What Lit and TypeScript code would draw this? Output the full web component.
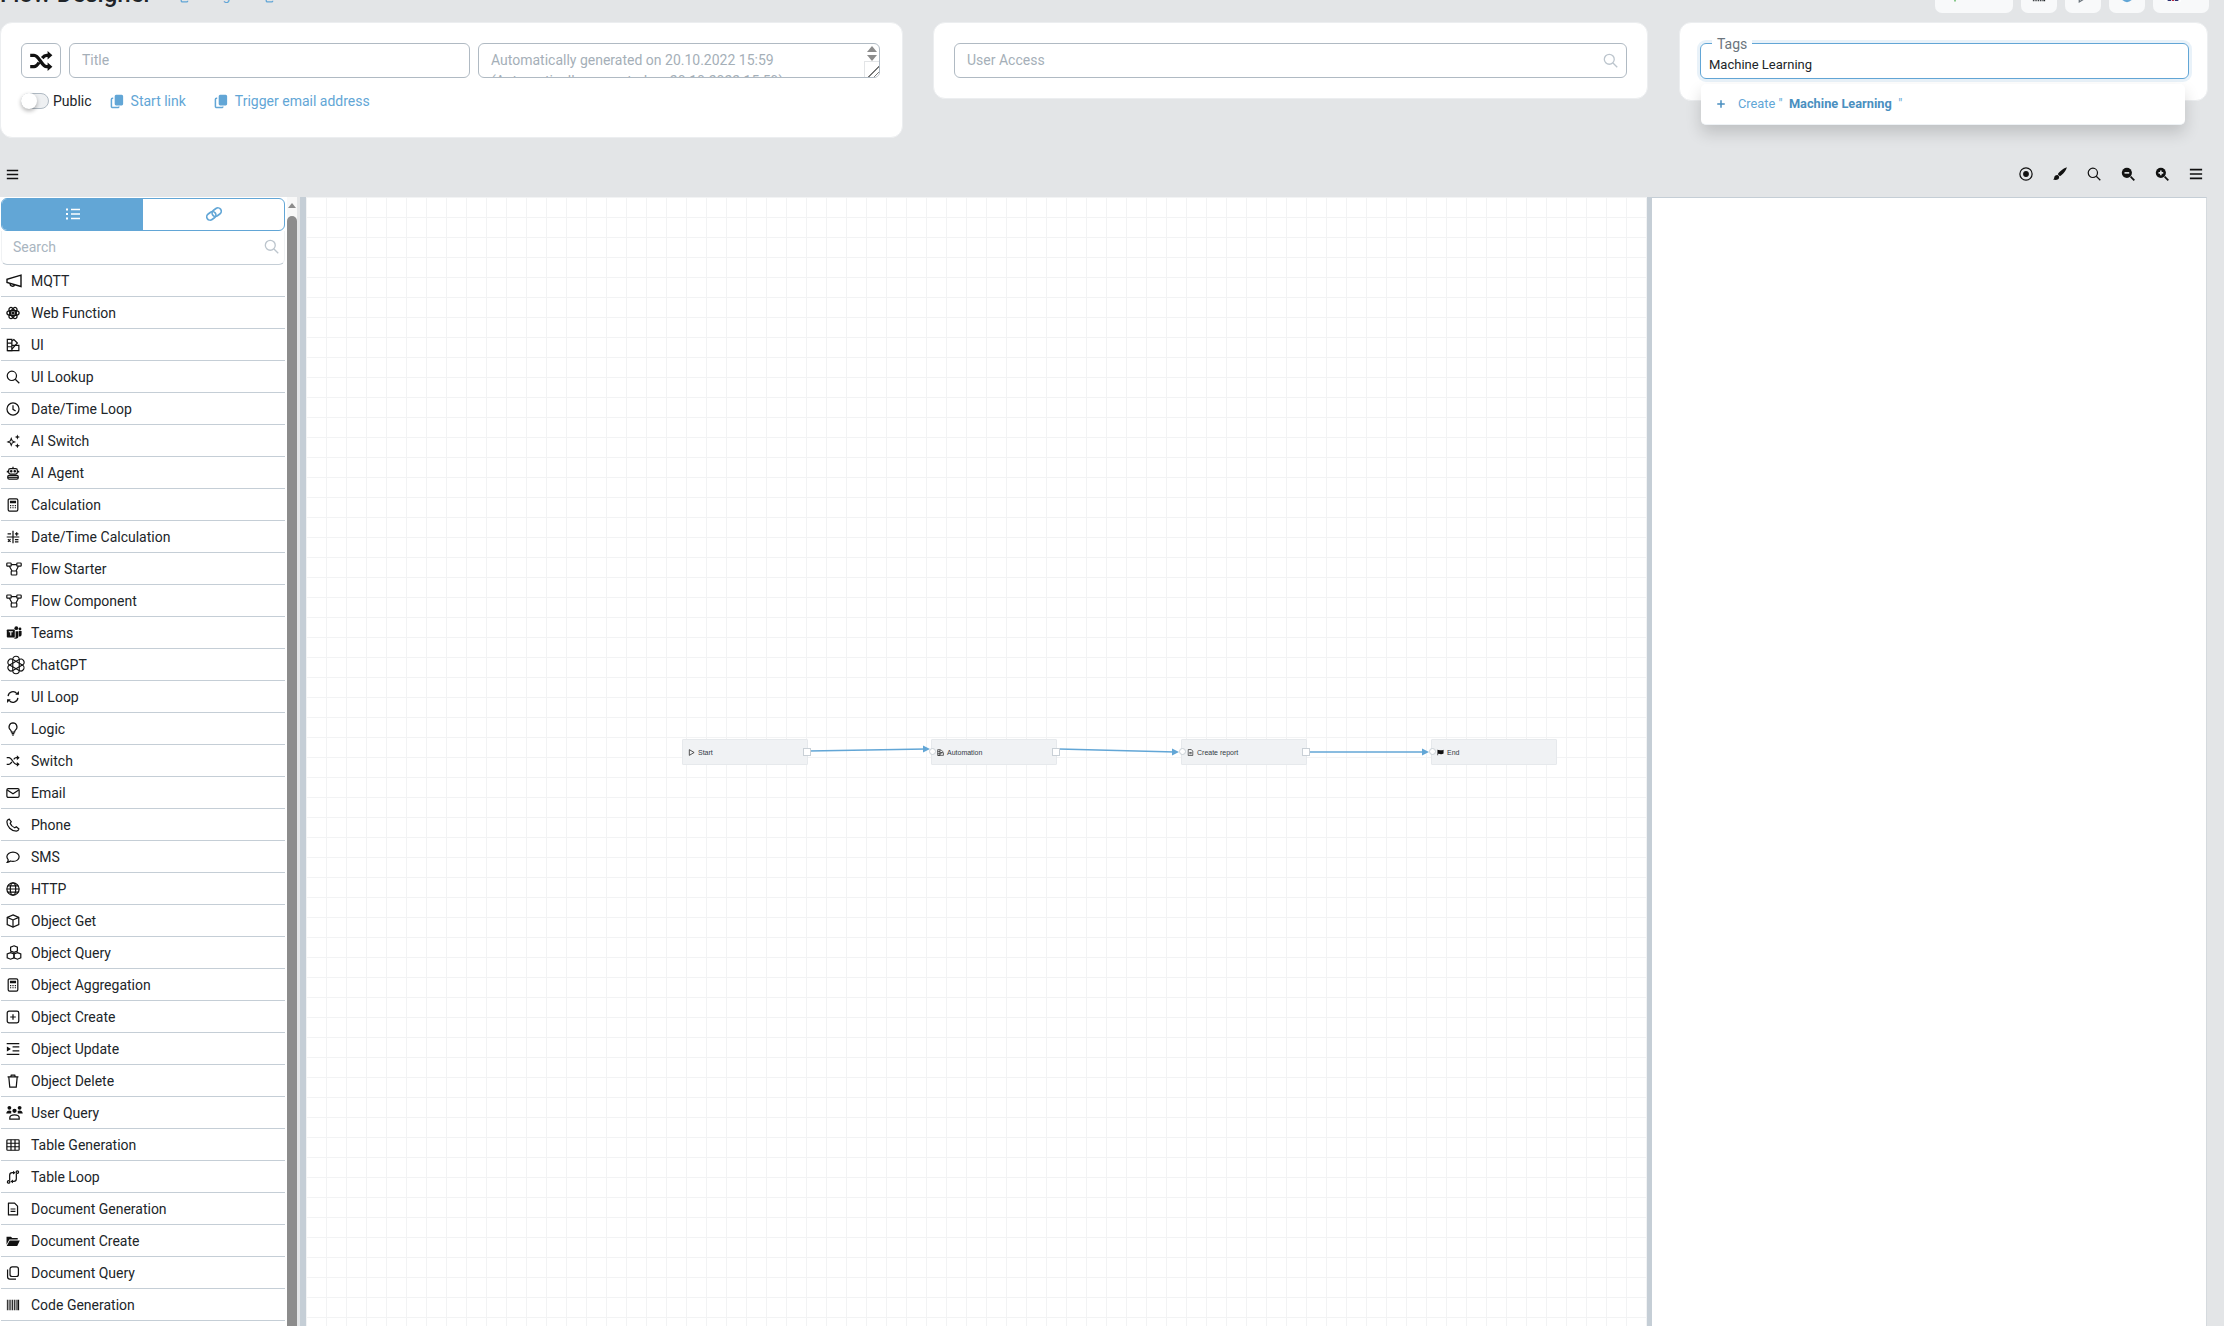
import { LitElement, css, html, svg } from "lit";
import { customElement } from "lit/decorators.js";

const ICONS: Record<string, unknown> = {
  megaphone: svg`<path d="M1 6.300v3.200l14 4V2.200z"/><path d="M4.300 10.500a2.200 2.200 0 0 0 4.300 1"/>`,
  atom: svg`<g stroke-width="1.500"><ellipse cx="8" cy="8" rx="7" ry="3"/><ellipse cx="8" cy="8" rx="7" ry="3" transform="rotate(60 8 8)"/><ellipse cx="8" cy="8" rx="7" ry="3" transform="rotate(120 8 8)"/></g><circle cx="8" cy="8" r="1.200" fill="currentColor"/>`,
  swatch: svg`<path d="M1.500 1.500h5.200v13H1.500z"/><path d="M1.500 5.800h5.200M1.500 10h5.200"/><path d="M6.700 3.600 9 1.700l4 4-6.300 7"/><path d="M6.700 8.400h8v6.100h-13"/>`,
  search: svg`<circle cx="6.700" cy="6.700" r="5.300"/><path d="m10.600 10.600 4.600 4.600"/>`,
  clock: svg`<circle cx="8" cy="8" r="6.900"/><path d="M8 3.800v4.600l3 1.900"/>`,
  spark: svg`<path fill="currentColor" stroke="none" d="M6 3.500 7.600 7.400 11.500 9 7.600 10.600 6 14.500 4.400 10.600.5 9l3.900-1.600zm0 3L5.400 8.400 3.400 9l2 .6.6 1.900.6-1.900 2-.6-2-.6zM13 .5l.8 2.200 2.200.8-2.200.8-.8 2.200-.8-2.200-2.200-.8 2.200-.8zM13 10.500l.8 2.200 2.200.8-2.200.8-.8 2.200-.8-2.200-2.200-.8 2.200-.8z"/>`,
  robot: svg`<rect x="3" y="3" width="10" height="6.200" rx="2"/><path d="M8 .8V3M1.600 5.500v2M14.400 5.500v2"/><circle cx="6" cy="6" r=".8" fill="currentColor"/><circle cx="10" cy="6" r=".8" fill="currentColor"/><rect x="2" y="10.800" width="12" height="4.200" rx="1.600"/><path d="M2 12.900h12"/>`,
  calc: svg`<rect x="2.500" y="1" width="11" height="14" rx="1.600"/><path fill="currentColor" stroke="none" d="M4.500 3h7v3h-7zM4.600 8h1.400v1.300H4.600zM7.300 8h1.400v1.300H7.300zM10 8h1.400v1.300H10zM4.600 10.500h1.400v1.300H4.600zM7.300 10.500h1.400v1.300H7.300zM10 10.500h1.400v1.300H10z"/>`,
  ops: svg`<path d="M.8 8h14.400M8 .8v14.400M1.800 4.500h4M10.200 4.500h4M12.200 2.500v4M2.200 10.600l3 3M5.200 10.600l-3 3M10.200 11h4M10.200 13.500h4"/>`,
  flow: svg`<g stroke-width="1.200"><rect x=".8" y="2" width="4.400" height="3.200" rx=".8"/><rect x="10.800" y="2" width="4.400" height="3.200" rx=".8"/><rect x="5.200" y="10" width="5.600" height="4" rx=".8"/><path d="M5.200 3.600h5.600M3.400 5.200 6 10M12.400 5.200 10 10"/></g>`,
  teams: svg`<g fill="currentColor" stroke="none"><rect x=".8" y="4.500" width="8" height="8" rx=".8"/><circle cx="10.300" cy="3.200" r="1.900"/><circle cx="14" cy="4" r="1.400"/><path d="M9.600 6.200h2.900V11a2.800 2.800 0 0 1-2.900 2.700c-.9 0-1.600-.3-2.100-.9h1.600c.3 0 .5-.3.5-.6zM13 6h2.600v3.600a2 2 0 0 1-2.600 1.800z"/></g><path stroke="#fff" stroke-width="1.100" d="M2.800 6.800h4M4.800 6.800v3.800"/>`,
  gpt: svg`<g stroke-width=".9"><rect x="5.400" y="1" width="5.200" height="14" rx="2.600"/><rect x="5.400" y="1" width="5.200" height="14" rx="2.600" transform="rotate(60 8 8)"/><rect x="5.400" y="1" width="5.200" height="14" rx="2.600" transform="rotate(120 8 8)"/></g>`,
  loop: svg`<path d="M2.400 7a5.600 5.600 0 0 1 10-2.800M13.600 9a5.600 5.600 0 0 1-10 2.800"/><path fill="currentColor" stroke="none" d="M10.600 5.400h4.200V1.200zM5.400 10.600H1.200v4.200z"/>`,
  bulb: svg`<path d="M8 1a4.600 4.600 0 0 0-3 8c.7.7 1 1.400 1.200 2.500h3.600C10 10.400 10.300 9.700 11 9a4.600 4.600 0 0 0-3-8z"/><path d="M6.400 13.300h3.200M7.200 15h1.600"/>`,
  shuffle: svg`<path d="M.8 4.200h2.600c3.400 0 5 7.600 8.400 7.600h1.400M.8 11.800h2.600c1.400 0 2.400-1.300 3.300-2.800M8.800 6.100c.8-1 1.800-1.900 3-1.900h1.400"/><path fill="currentColor" stroke="none" d="M12.400 1.400 15.600 4.200 12.400 7zM12.400 9 15.600 11.800 12.400 14.600z"/>`,
  mail: svg`<rect x="1" y="3" width="14" height="10" rx="1.600"/><path d="M1.400 4.600 8 9l6.600-4.400"/>`,
  phone: svg`<path d="M3.600 1.200 6 4.200 4.800 6c.7 2.100 2.900 4.300 5.200 5.200l1.800-1.200 3 2.500c-.4 1.700-1.700 2.500-3 2.500C6 15 1 9.700 1 4.400 1 3 2.200 1.600 3.600 1.200z"/>`,
  chat: svg`<path d="M8 2.400c3.900 0 7 2.400 7 5.400s-3.100 5.300-7 5.300c-1 0-2-.1-2.900-.5-1 .7-2.200 1.300-3.700 1.500.7-.9 1-1.800 1.200-2.800C1.900 10.300 1 9.100 1 7.800c0-3 3.100-5.400 7-5.400z"/>`,
  globe: svg`<circle cx="8" cy="8" r="7"/><ellipse cx="8" cy="8" rx="3.100" ry="7"/><path d="M1 8h14M2 4.500h12M2 11.500h12"/>`,
  box: svg`<path d="M8 1 14.600 3.800v8.400L8 15l-6.600-2.800V3.800z"/><path d="M1.400 3.800 8 6.800l6.600-3M8 6.800V15"/>`,
  boxes: svg`<g stroke-width="1.200"><path d="M8 .8 11.400 2.200V6L8 7.400 4.600 6V2.200z"/><path d="M4.600 7.600 8 9v3.800l-3.400 1.400L1.200 12.800V9z"/><path d="M11.400 7.600 14.800 9v3.800l-3.400 1.400L8 12.800V9z"/></g>`,
  plusbox: svg`<rect x="1.400" y="1.400" width="13.200" height="13.200" rx="2"/><path d="M8 4.800v6.400M4.800 8h6.400"/>`,
  indent: svg`<path d="M.8 1.800h14.400M7.500 5.500h7.700M7.500 10.200h7.700M.8 14.200h14.400"/><path fill="currentColor" stroke="none" d="M1 5l4.600 2.900L1 10.800z"/>`,
  trash: svg`<path d="M1.800 3.300h12.400M3.200 3.300l1.100 11.700h7.400l1.100-11.700M5.400 3.300 6 1.300h4l.6 2"/>`,
  users: svg`<g fill="currentColor" stroke="none"><circle cx="3.200" cy="3.600" r="1.800"/><circle cx="12.800" cy="3.600" r="1.800"/><circle cx="8" cy="6.400" r="2"/><path d="M.2 9c.2-1.800 1.400-2.800 3-2.800.9 0 1.400.2 1.900.7-.3.8-.3 1.400-.1 2.100zM15.800 9c-.2-1.800-1.400-2.800-3-2.800-.9 0-1.400.2-1.900.7.3.8.3 1.400.1 2.100z"/></g><path d="M3.600 14.200v-1.200c0-1.600 2-2.800 4.400-2.800s4.400 1.200 4.400 2.800v1.200z" stroke-width="1.200"/>`,
  table: svg`<rect x="1" y="2" width="14" height="12" rx="1"/><path d="M1 6h14M1 10h14M5.700 2v12M10.300 2v12"/>`,
  tableloop: svg`<path d="M4.200 12V6a3 3 0 0 1 3-3h1M11.800 4v6a3 3 0 0 1-3 3H8"/><path fill="currentColor" stroke="none" d="M8 .8 11 3 8 5.200zM8 10.800 5 13l3 2.200z"/><circle cx="13" cy="2.400" r="1.400"/><circle cx="3" cy="13.600" r="1.400"/>`,
  file: svg`<path d="M2.800 1.200h7l3.400 3.600v10H2.800z" stroke-linejoin="round"/><path d="M5.200 8h5.600M5.200 10.800h5.600"/>`,
  folder: svg`<path fill="currentColor" stroke="none" d="M.6 3h5l1.500 1.600h6.300v1.800H3.800L.6 12.400zM4.200 7.400h11.600L12.800 13.800H.8z"/>`,
  copy: svg`<rect x="4.600" y="1" width="9.600" height="11" rx="2.400"/><path d="M1.800 4v8.400A2.600 2.600 0 0 0 4.400 15h7"/>`,
  barcode: svg`<path fill="currentColor" stroke="none" d="M1 2h1.100v12H1zM3 2h1.100v12H3zM5 2h1.100v12H5zM7 2h1.100v12H7zM9 2h1.100v12H9zM11 2h1.100v12H11zM13 2h2v12h-2z"/>`,
  list: svg`<path d="M6 3.500h9M6 8h9M6 12.500h9" stroke-width="1.600"/><path fill="currentColor" stroke="none" d="M1 2.500h2v2H1zM1 7h2v2H1zM1 11.500h2v2H1z"/>`,
  link: svg`<g stroke-width="1.500" transform="rotate(-35 8 8)"><rect x=".8" y="5" width="8.600" height="6" rx="3"/><rect x="6.600" y="5" width="8.600" height="6" rx="3"/></g>`,
  bars: svg`<path d="M1 3h14M1 8h14M1 13h14" stroke-width="1.900"/>`,
  docs: svg`<path fill="currentColor" stroke="none" d="M6.500.8h6A1.600 1.600 0 0 1 14 2.400v8.200a1.600 1.600 0 0 1-1.500 1.600h-6A1.600 1.600 0 0 1 5 10.600V2.400A1.600 1.600 0 0 1 6.500.8z"/><path stroke-width="1.600" d="M3.400 4.400h-.6A1.300 1.300 0 0 0 1.500 5.700v7.500A1.300 1.300 0 0 0 2.800 14.500h5.400a1.300 1.300 0 0 0 1.300-1.300"/>`,
  target: svg`<circle cx="8" cy="8" r="7"/><circle cx="8" cy="8" r="2.600" fill="currentColor"/>`,
  brush: svg`<path fill="currentColor" stroke="none" d="M15.800.2C12.500 1 7.500 4.800 5.500 8.200l2.400 2.300c3.400-2 7.300-6.800 7.900-10.300zM4.800 9C2.800 9 1.600 10.300 1.400 12c-.1 1.200-.5 1.800-1.400 2.400 2 .8 4.500.8 5.800-.3 1.200-1 1.600-2.800.8-3.900C6.300 9.500 5.500 9.100 4.800 9z"/>`,
  zoomout: svg`<circle cx="6.700" cy="6.700" r="5.800" fill="currentColor" stroke="none"/><path stroke-width="2" d="m11 11 4.200 4.200"/><path stroke="#e3e5e7" stroke-width="1.800" d="M4 6.700h5.400"/>`,
  zoomin: svg`<circle cx="6.700" cy="6.700" r="5.800" fill="currentColor" stroke="none"/><path stroke-width="2" d="m11 11 4.200 4.200"/><path stroke="#e3e5e7" stroke-width="1.800" d="M4 6.700h5.400M6.700 4v5.400"/>`,
  play: svg`<path d="M3 1.500 14 8 3 14.500z" stroke-width="1.600"/>`,
  flag: svg`<path fill="currentColor" stroke="none" d="M1 1.500h1.500v13H1zM2.500 2.500c3-1.400 4.500 1 7 .5 2-.4 3.500-.8 5.500-1.500v9c-2 .7-3.500 1.100-5.500 1.500-2.500.5-4-1.900-7-.5z"/>`,
  plus: svg`<path stroke-width="2.400" d="M8 2v12M2 8h12"/>`,
  dot: svg`<circle cx="8" cy="8" r="7" fill="currentColor" stroke="none"/>`,
  uk: svg`<rect y="2" width="16" height="12" fill="#2a2f6e" stroke="none"/><path stroke="#fff" stroke-width="2.400" d="M0 2l16 12M16 2 0 14"/><path stroke="#fff" stroke-width="3.600" d="M8 2v12M0 8h16"/><path stroke="#c0223a" stroke-width="2" d="M8 2v12M0 8h16"/>`,
};

// icons that are wider than the 14px default in the step list
const SIZES: Record<string, number> = { megaphone: 16, flow: 16, teams: 16, boxes: 16, users: 17, gpt: 20 };

const icon = (name: string, size = 14) => html`<svg
  class="icon"
  width=${size}
  height=${size}
  viewBox="0 0 16 16"
  fill="none"
  stroke="currentColor"
  stroke-width="1.400"
>
  ${ICONS[name]}
</svg>`;

const STEPS: [string, string][] = [
  ["megaphone", "MQTT"],
  ["atom", "Web Function"],
  ["swatch", "UI"],
  ["search", "UI Lookup"],
  ["clock", "Date/Time Loop"],
  ["spark", "AI Switch"],
  ["robot", "AI Agent"],
  ["calc", "Calculation"],
  ["ops", "Date/Time Calculation"],
  ["flow", "Flow Starter"],
  ["flow", "Flow Component"],
  ["teams", "Teams"],
  ["gpt", "ChatGPT"],
  ["loop", "UI Loop"],
  ["bulb", "Logic"],
  ["shuffle", "Switch"],
  ["mail", "Email"],
  ["phone", "Phone"],
  ["chat", "SMS"],
  ["globe", "HTTP"],
  ["box", "Object Get"],
  ["boxes", "Object Query"],
  ["calc", "Object Aggregation"],
  ["plusbox", "Object Create"],
  ["indent", "Object Update"],
  ["trash", "Object Delete"],
  ["users", "User Query"],
  ["table", "Table Generation"],
  ["tableloop", "Table Loop"],
  ["file", "Document Generation"],
  ["folder", "Document Create"],
  ["copy", "Document Query"],
  ["barcode", "Code Generation"],
];

const NODES = [
  { x: 376, label: "Start", ic: "play", input: false, output: true },
  { x: 625, label: "Automation", ic: "swatch", input: true, output: true },
  { x: 875, label: "Create report", ic: "file", input: true, output: true },
  { x: 1125, label: "End", ic: "flag", input: true, output: false },
];

const EDGES = [
  [503, 554, 624, 552],
  [753, 552, 873, 555],
  [1003, 555, 1123, 555],
];

@customElement("app-root")
export class AppRoot extends LitElement {
  static styles = css`
    :host {
      display: block;
      width: 2224px;
      height: 1326px;
      overflow: hidden;
      background: #e3e5e7;
      font-family: Roboto, "Liberation Sans", sans-serif;
      font-size: 14px;
      color: #212529;
    }
    .icon {
      flex: none;
      display: block;
    }
    .top {
      display: flex;
      height: 33px;
      margin-top: -20px;
      overflow: hidden;
    }
    .top h1 {
      margin: 0;
      font-size: 24px;
      font-weight: 500;
      line-height: 29px;
      white-space: nowrap;
    }
    .top-link {
      display: flex;
      gap: 14px;
      margin-left: 28px;
      padding-top: 10px;
      color: #62a6d6;
      line-height: 14px;
    }
    .top-link span {
      margin-top: -2px;
    }
    .top-link + .top-link {
      margin-left: 27px;
    }
    .top-btns {
      display: flex;
      gap: 8px;
      margin-left: auto;
      padding-right: 15px;
    }
    .top-btn {
      display: flex;
      align-items: flex-end;
      justify-content: center;
      width: 36px;
      height: 33px;
      padding-bottom: 10px;
      box-sizing: border-box;
      background: #f8f9fa;
      border-radius: 0 0 7px 7px;
    }
    .top-btn.wide {
      width: 78px;
      justify-content: flex-start;
      padding-left: 14px;
      color: #7cc47f;
    }
    .top-btn.flag {
      width: 56px;
      padding-right: 16px;
    }
    .cards {
      display: flex;
      align-items: flex-start;
      gap: 30px;
      height: 115px;
      margin-top: 9px;
    }
    .card {
      position: relative;
      box-sizing: border-box;
      background: #fff;
      border: 1px solid #eceef0;
      border-radius: 12px;
      padding: 20px;
    }
    .card.flow {
      width: 903px;
      height: 116px;
    }
    .card.access {
      width: 715px;
      height: 77px;
    }
    .card.tags {
      width: 529px;
      height: 79px;
      margin-left: 1px;
    }
    .fields {
      display: flex;
      gap: 8px;
    }
    .field {
      box-sizing: border-box;
      height: 35px;
      border: 1px solid #b0bac3;
      border-radius: 6px;
      background: #fff;
      color: #a5afb8;
      padding: 0 12px;
      line-height: 33px;
      white-space: nowrap;
      overflow: hidden;
    }
    .kind {
      display: flex;
      align-items: center;
      justify-content: center;
      box-sizing: border-box;
      width: 40px;
      height: 35px;
      border: 1px solid #b0bac3;
      border-radius: 6px;
      color: #111;
    }
    .kind .icon {
      stroke-width: 2.200;
    }
    .title-field {
      width: 401px;
    }
    .desc-field {
      position: relative;
      width: 402px;
      line-height: 21px;
      padding-top: 6px;
    }
    .spin {
      position: absolute;
      top: 2px;
      right: 2px;
      display: flex;
      flex-direction: column;
      gap: 3px;
      align-items: center;
    }
    .spin i {
      width: 0;
      height: 0;
      border-left: 5px solid transparent;
      border-right: 5px solid transparent;
    }
    .spin .up {
      border-bottom: 6px solid #8c8c8c;
    }
    .spin .down {
      border-top: 6px solid #8c8c8c;
    }
    .grip {
      position: absolute;
      right: 0;
      bottom: 0;
      width: 14px;
      height: 15px;
      background: linear-gradient(135deg, #fff 62%, #777 62%, #777 66%, #fff 66%, #fff 80%, #777 80%, #777 84%, #fff 84%);
      border-left: 1px solid #e3e5e7;
      border-top: 1px solid #e3e5e7;
    }
    .opts {
      display: flex;
      align-items: center;
      height: 16px;
      margin-top: 15px;
    }
    .toggle {
      position: relative;
      box-sizing: border-box;
      width: 28px;
      height: 16px;
      border: 1px solid #b0bac3;
      border-radius: 8px;
      background: #eef0f2;
      margin-right: 4px;
    }
    .toggle::after {
      content: "";
      position: absolute;
      left: -1px;
      top: -1px;
      width: 16px;
      height: 16px;
      border-radius: 50%;
      background: #fff;
      box-shadow: 0 2px 4px rgba(0, 0, 0, 0.3);
    }
    .opt-link {
      display: flex;
      align-items: center;
      gap: 6px;
      color: #62a6d6;
    }
    .opt-link.first {
      margin-left: 18px;
    }
    .opt-link.second {
      margin-left: 28px;
    }
    .access .field {
      position: relative;
      padding: 0 8px 0 12px;
      display: flex;
      align-items: center;
      justify-content: space-between;
    }
    .access .icon,
    .search .icon {
      color: #bcc5cd;
    }
    .tag-input {
      position: relative;
      width: 489px;
      height: 36px;
      box-sizing: border-box;
      border: 1px solid #62a6d6;
      border-radius: 6px;
      box-shadow: 0 0 0 3px rgba(98, 166, 214, 0.14);
      color: #212529;
      padding: 13px 8px 0;
      font-size: 13px;
      line-height: 15px;
    }
    .legend {
      position: absolute;
      left: 11px;
      top: -8px;
      padding: 0 5px;
      background: #fff;
      color: #6c757d;
      font-size: 14px;
      line-height: 16px;
    }
    .menu {
      position: absolute;
      left: 21px;
      top: 61px;
      box-sizing: border-box;
      width: 484px;
      height: 41px;
      padding: 0 0 1px 15px;
      background: #fff;
      border-radius: 5px;
      border-bottom: 1px solid #eef2f5;
      box-shadow: 0 8px 16px rgba(0, 0, 0, 0.16);
      display: flex;
      align-items: center;
      color: #62a6d6;
      font-size: 12.800px;
      white-space: pre;
      z-index: 2;
    }
    .menu .icon {
      margin-right: 12px;
      color: #4a8fc0;
    }
    .menu b {
      color: #4a8fc0;
      font-weight: 700;
    }
    .tools {
      display: flex;
      align-items: center;
      justify-content: space-between;
      height: 60px;
      padding: 24px 21px 10px 6px;
      box-sizing: border-box;
      color: #111;
    }
    .tool-group {
      display: flex;
      gap: 20px;
    }
    .main {
      display: flex;
      height: 1129px;
    }
    .side {
      width: 287px;
      background: #fff;
      overflow: hidden;
      flex: none;
      padding: 1px 2px 0 1px;
      box-sizing: border-box;
    }
    .tabs {
      display: flex;
      box-sizing: border-box;
      height: 33px;
      border: 1px solid #62a6d6;
      border-radius: 6px;
      overflow: hidden;
    }
    .tabs div {
      display: flex;
      align-items: center;
      justify-content: center;
      width: 50%;
      padding-bottom: 2px;
      color: #62a6d6;
    }
    .tabs .on {
      background: #62a6d6;
      color: #fff;
    }
    .search {
      display: flex;
      align-items: center;
      justify-content: space-between;
      box-sizing: border-box;
      height: 34px;
      padding: 0 5px 2px 11px;
      border: 1px solid #f0f2f4;
      border-top: 0;
      border-bottom: 1px solid #c5ced6;
      border-radius: 0 0 6px 6px;
      color: #a9b5c0;
    }
    .row {
      display: flex;
      align-items: center;
      box-sizing: border-box;
      height: 32px;
      border-bottom: 1px solid #c5ced6;
      padding-left: 5px;
    }
    .row .slot {
      width: 25px;
      flex: none;
      color: #111;
    }
    .scroll {
      position: relative;
      box-sizing: border-box;
      width: 10px;
      flex: none;
      background: #f8f8f8;
      padding-top: 19px;
    }
    .scroll::before {
      content: "";
      position: absolute;
      top: 6px;
      left: 1px;
      border-left: 4px solid transparent;
      border-right: 4px solid transparent;
      border-bottom: 5px solid #8c8c8c;
    }
    .thumb {
      height: 100%;
      background: #8c8c8c;
      border-radius: 5px 5px 0 0;
    }
    .gutter {
      width: 3px;
      flex: none;
    }
    .band {
      width: 6px;
      flex: none;
      background: #c5ced6;
    }
    .canvas {
      position: relative;
      width: 1341px;
      flex: none;
      background-color: #fff;
      background-image:
        linear-gradient(#f2f3f4 1px, transparent 1px),
        linear-gradient(90deg, #f2f3f4 1px, transparent 1px);
      background-size: 20px 20px;
      overflow: hidden;
    }
    .canvas svg.edges {
      position: absolute;
      inset: 0;
      width: 100%;
      height: 100%;
    }
    .node {
      position: absolute;
      top: 542px;
      box-sizing: border-box;
      display: flex;
      align-items: center;
      gap: 3px;
      width: 126px;
      height: 26px;
      padding-left: 5px;
      background: #f0f2f4;
      border: 1px solid #e6e9ec;
      border-radius: 1px;
      font-size: 7px;
      font-family: "Liberation Sans", sans-serif;
      color: #333a45;
    }
    .node .icon {
      color: #111;
    }
    .port-in {
      position: absolute;
      left: -3px;
      top: 8px;
      box-sizing: border-box;
      width: 7px;
      height: 7px;
      border: 1px solid #c9d0d6;
      border-radius: 50%;
      background: #fff;
    }
    .port-out {
      position: absolute;
      right: -4px;
      top: 8px;
      box-sizing: border-box;
      width: 8px;
      height: 8px;
      border: 1px solid #c9d0d6;
      background: #fff;
    }
    .band.right {
      width: 5px;
    }
    .panel {
      width: 555px;
      flex: none;
      box-sizing: border-box;
      background: #fff;
      border-top: 1px solid #c5ced6;
      border-right: 1px solid #d5dade;
    }
  `;

  render() {
    return html`
      <div class="top">
        <h1>Flow Designer</h1>
        <div class="top-link">${icon("docs", 13)}<span>Logs</span></div>
        <div class="top-link">${icon("docs", 13)}</div>
        <div class="top-btns">
          <div class="top-btn wide">${icon("plus", 12)}</div>
          <div class="top-btn">${icon("barcode", 14)}</div>
          <div class="top-btn" style="color:#6c757d">${icon("play", 12)}</div>
          <div class="top-btn" style="color:#62a6d6">${icon("dot", 14)}</div>
          <div class="top-btn flag">${icon("uk", 16)}</div>
        </div>
      </div>
      <div class="cards">
        <div class="card flow">
          <div class="fields">
            <div class="kind">${icon("shuffle", 24)}</div>
            <div class="field title-field">Title</div>
            <div class="field desc-field">
              Automatically generated on 20.10.2022 15:59<br />(Automatically generated on 20.10.2022 15:59)
              <div class="spin"><i class="up"></i><i class="down"></i></div>
              <div class="grip"></div>
            </div>
          </div>
          <div class="opts">
            <div class="toggle"></div>
            <span>Public</span>
            <div class="opt-link first">${icon("docs", 15)}<span>Start link</span></div>
            <div class="opt-link second">${icon("docs", 15)}<span>Trigger email address</span></div>
          </div>
        </div>
        <div class="card access">
          <div class="field"><span>User Access</span>${icon("search", 15)}</div>
        </div>
        <div class="card tags">
          <div class="tag-input"><span class="legend">Tags</span>Machine Learning</div>
          <div class="menu">${icon("plus", 10)}<span>Create "  </span><b>Machine Learning</b><span>  "</span></div>
        </div>
      </div>
      <div class="tools">
        ${icon("bars", 13)}
        <div class="tool-group">
          ${icon("target", 14)}${icon("brush", 14)}${icon("search", 14)}${icon("zoomout", 14)}${icon("zoomin", 14)}${icon("bars", 14)}
        </div>
      </div>
      <div class="main">
        <div class="side">
          <div class="tabs">
            <div class="on">${icon("list", 16)}</div>
            <div>${icon("link", 18)}</div>
          </div>
          <div class="search"><span>Search</span>${icon("search", 15)}</div>
          ${STEPS.map(
            ([ic, label]) => html`<div class="row">
              <div class="slot">${icon(ic, SIZES[ic] ?? 14)}</div>
              <span>${label}</span>
            </div>`
          )}
        </div>
        <div class="scroll"><div class="thumb"></div></div>
        <div class="gutter"></div>
        <div class="band"></div>
        <div class="canvas">
          <svg class="edges">
            ${EDGES.map(
              ([x1, y1, x2, y2]) => svg`
                <line x1=${x1} y1=${y1} x2=${x2 - 4} y2=${y2} stroke="#62a6d6" stroke-width="1.500" />
                <path d="M${x2} ${y2} l-7 -3.500 v7 z" fill="#62a6d6" />
              `
            )}
          </svg>
          ${NODES.map(
            (n) => html`<div class="node" style="left:${n.x}px">
              ${n.input ? html`<div class="port-in"></div>` : ""}
              ${icon(n.ic, 7)}<span>${n.label}</span>
              ${n.output ? html`<div class="port-out"></div>` : ""}
            </div>`
          )}
        </div>
        <div class="band right"></div>
        <div class="panel"></div>
      </div>
    `;
  }
}
